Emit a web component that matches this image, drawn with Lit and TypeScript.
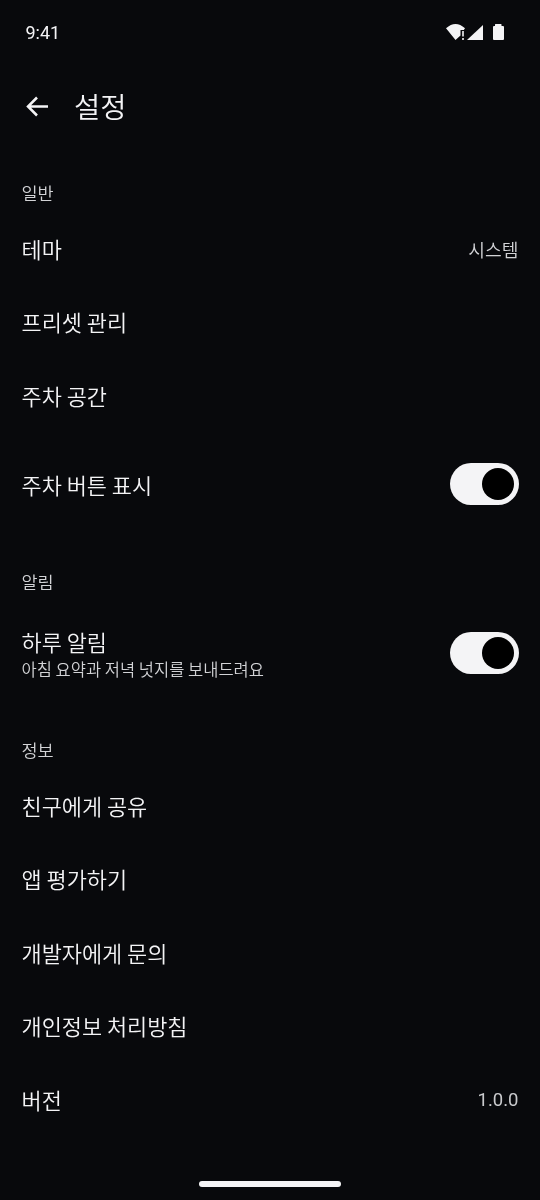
import { LitElement, html, css, svg } from "lit";
import { customElement } from "lit/decorators.js";

@customElement("app-root")
export class AppRoot extends LitElement {
  static styles = css`
    :host { display: block; width: 540px; height: 1200px; background: #08090c; color: #f4f4f6; overflow: hidden; position: relative;
      font-family: "Noto Sans CJK KR", "Noto Sans", sans-serif; font-weight: 350; }
    .page { will-change: transform; height: 1200px; }
    .status { height: 64px; display: flex; align-items: center; justify-content: space-between; padding: 0 36px 0 25.500px; box-sizing: border-box; }
    .time { font-family: Roboto, sans-serif; font-size: 18px; font-weight: 400; color: #f4f4f6; }
    .icons { display: flex; align-items: center; }
    .icons svg { display: block; }
    .toolbar { height: 84px; display: flex; align-items: center; padding-left: 22px; gap: 20px; box-sizing: border-box; }
    .toolbar svg { display: block; }
    .title { font-size: 28.500px; line-height: 40px; }
    .section { height: 64.500px; box-sizing: border-box; padding: 33px 21.500px 0; font-size: 17.500px; line-height: 24px; color: #d2d3d6; }
    .section.mid { height: 63.500px; }
    .section.last { height: 63.500px; padding-top: 32px; }
    .row { height: 73.500px; display: flex; align-items: center; justify-content: space-between; padding: 0 21.500px 0 21.500px; box-sizing: border-box; }
    .row.tall { height: 103.500px; }
    .row.tall .name { top: 0.500px; }
    .row.tall .toggle { margin-top: -1px; }
    .row.alert { height: 106px; }
    .name { font-size: 21.900px; line-height: 30px; position: relative; top: -0.500px; }
    .sub { font-size: 16.500px; line-height: 20px; color: #d2d3d6; margin-top: 2px; }
    .value { font-size: 18.200px; color: #d2d3d6; }
    .value.num { font-family: Roboto, sans-serif; font-size: 18.500px; font-weight: 400; color: #c9cacd; }
    .toggle { width: 68.500px; height: 42px; border-radius: 21px; background: #f4f4f6; display: flex; align-items: center; justify-content: flex-end; padding-right: 5px; box-sizing: border-box; }
    .knob { width: 32px; height: 32px; border-radius: 50%; background: #000; }
    .home { position: absolute; left: 199px; top: 1181px; width: 142px; height: 6px; border-radius: 3px; background: #f4f4f6; }
  `;

  private row(name: string, value = "", num = false) {
    return html`<div class="row"><div class="name">${name}</div>${value ? html`<div class="value ${num ? "num" : ""}">${value}</div>` : ""}</div>`;
  }

  render() {
    const toggle = html`<div class="toggle"><div class="knob"></div></div>`;
    return html`
      <div class="page">
      <div class="status">
        <div class="time">9:41</div>
        <div class="icons">
          <svg width="58" height="20" viewBox="0 0 58 20" fill="#f4f4f6">
            ${svg`<path d="M0 6.300 Q9.500 -2.500 19 6.300 L17.800 8 L14.500 8 L14.500 13.500 L9.500 18 Z"/>
            <rect x="16.200" y="9" width="1.600" height="5.500"/><rect x="16.200" y="16" width="1.600" height="2"/>
            <path d="M21 18 L37 3 L37 18 Z"/>
            <path d="M49 4 L49 2.500 Q49 2 49.500 2 L55 2 Q55.500 2 55.500 2.500 L55.500 4 L57 4 Q58 4 58 5 L58 17 Q58 18 57 18 L48 18 Q47 18 47 17 L47 5 Q47 4 48 4 Z"/>`}
          </svg>
        </div>
      </div>
      <div class="toolbar">
        <svg width="32" height="32" viewBox="0 0 32 32" fill="none" stroke="#f4f4f6" stroke-width="2.500">
          ${svg`<path d="M26 16.500 H6.500 M15 7.500 L6 16.500 L15 25.500"/>`}
        </svg>
        <div class="title">설정</div>
      </div>
      <div class="section">일반</div>
      ${this.row("테마", "시스템")}
      ${this.row("프리셋 관리")}
      ${this.row("주차 공간")}
      <div class="row tall"><div class="name">주차 버튼 표시</div>${toggle}</div>
      <div class="section mid">알림</div>
      <div class="row alert"><div><div class="name">하루 알림</div><div class="sub">아침 요약과 저녁 넛지를 보내드려요</div></div>${toggle}</div>
      <div class="section last">정보</div>
      ${this.row("친구에게 공유")}
      ${this.row("앱 평가하기")}
      ${this.row("개발자에게 문의")}
      ${this.row("개인정보 처리방침")}
      ${this.row("버전", "1.0.0", true)}
      <div class="home"></div>
      </div>
    `;
  }
}
